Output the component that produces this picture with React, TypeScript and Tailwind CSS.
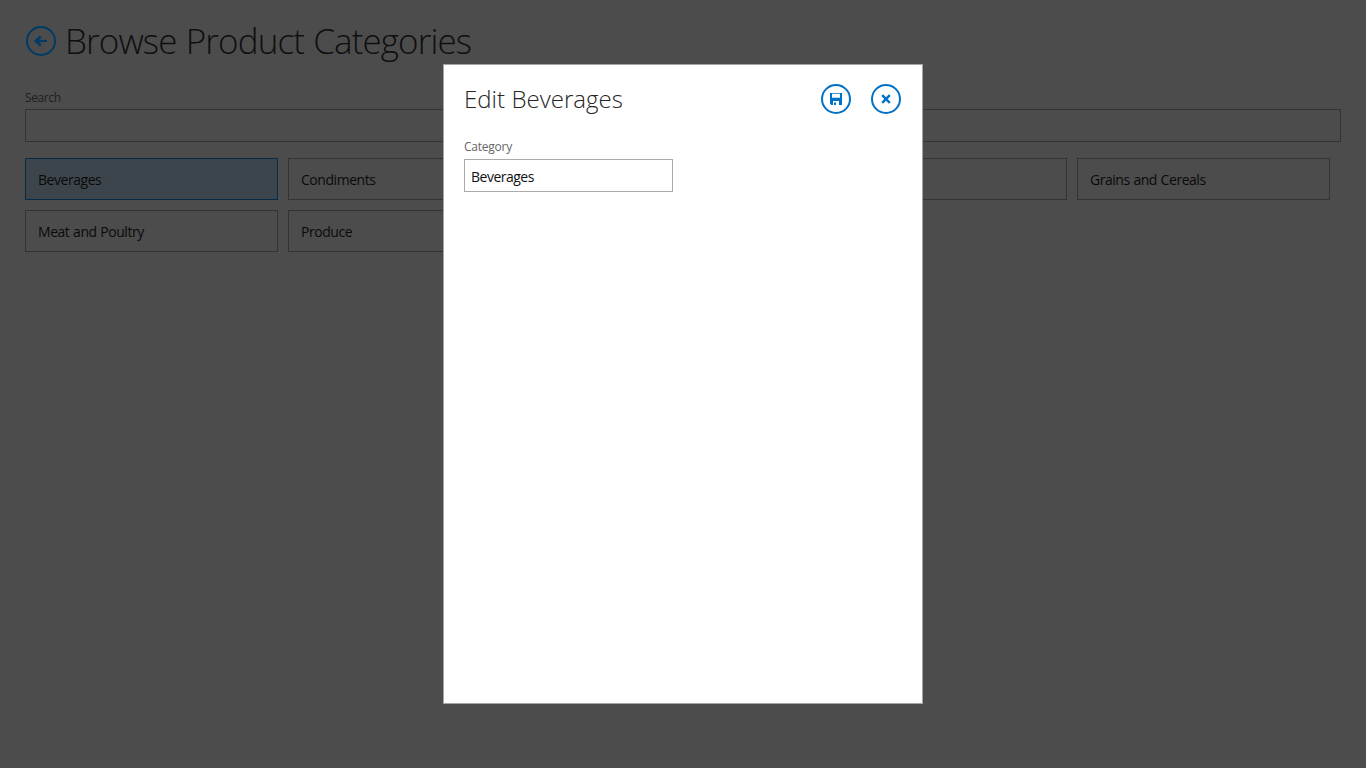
import type { ReactNode } from "react";

const categories = [
  "Beverages",
  "Condiments",
  "Confections",
  "Dairy Products",
  "Grains and Cereals",
  "Meat and Poultry",
  "Produce",
  "Seafood",
];

function RoundButton({ label, children, className = "border-[#0072c6] text-[#0072c6]" }: { label: string; children: ReactNode; className?: string }) {
  return (
    <button aria-label={label} className={`flex size-[30px] shrink-0 items-center justify-center rounded-full border-2 ${className}`}>
      {children}
    </button>
  );
}

export default function App() {
  return (
    <div className="h-screen w-full overflow-hidden bg-[#4c4c4c] font-['Open_Sans','Noto_Sans',sans-serif] text-[#0a0a0a]">
      <main className="px-[25px]">
        <header className="flex h-[89px] items-start pl-px pt-[26px]">
          <RoundButton label="Back" className="border-[#003b66] text-[#003b66]">
            <svg width="16" height="16" viewBox="0 0 16 16" fill="none" stroke="currentColor" strokeWidth="2.2">
              <path d="M14 8H3" />
              <path d="M7.8 3.6 2.8 8l5 4.4" strokeWidth="2.6" />
            </svg>
          </RoundButton>
          <h1 className="ml-[9px] -mt-[9px] whitespace-nowrap text-[35px] font-light leading-[48px] tracking-[-0.89px] text-[#0f0f0f] [word-spacing:1px]">Browse Product Categories</h1>
        </header>
        <label className="block h-5 text-[12px] leading-[18px] tracking-[-0.4px] text-[#1e1e1e]">Search</label>
        <div className="h-[33px] border border-[#333]" />
        <div className="mt-4 flex flex-wrap gap-[10px]">
          {categories.map((name, i) => (
            <div
              key={name}
              className={`flex h-[42px] w-[253px] items-center border pl-3 pt-[2px] text-[14px] leading-5 tracking-[-0.46px] [word-spacing:0.5px] ${i === 0 ? "border-[#052b48] bg-[#3d454c]" : "border-[#333]"}`}
            >
              {name}
            </div>
          ))}
        </div>
      </main>
      <section role="dialog" className="absolute left-[443px] top-16 h-[640px] w-[480px] border border-[#a5a5a5] bg-white px-5 pt-[19px]">
        <div className="flex items-start justify-between pr-px">
          <h2 className="-mt-[3px] whitespace-nowrap text-[24px] font-light leading-9 tracking-[0.03px] text-[#262626]">Edit Beverages</h2>
          <div className="flex gap-5">
            <RoundButton label="Save">
              <svg width="12" height="12" viewBox="0 0 12 12" fill="currentColor" fillRule="evenodd">
                <path d="M0 0h12v12H9V8H3v4H1.3L0 10.7zM2 .8v4h8v-4zM4 9.5h2V12H4z" />
              </svg>
            </RoundButton>
            <RoundButton label="Close">
              <svg width="10" height="10" viewBox="0 0 10 10" fill="none" stroke="currentColor" strokeWidth="2.4">
                <path d="m1.2 1.2 7.6 7.6m0-7.6L1.2 8.8" />
              </svg>
            </RoundButton>
          </div>
        </div>
        <label className="mt-[21px] block h-[21px] text-[12px] leading-[18px] tracking-[-0.25px] text-[#666]">Category</label>
        <input className="block h-[33px] w-[209px] border border-[#ababab] px-[6px] pt-[2px] text-[14px] leading-5 tracking-[-0.5px] text-[#111] outline-none" defaultValue="Beverages" />
      </section>
    </div>
  );
}
